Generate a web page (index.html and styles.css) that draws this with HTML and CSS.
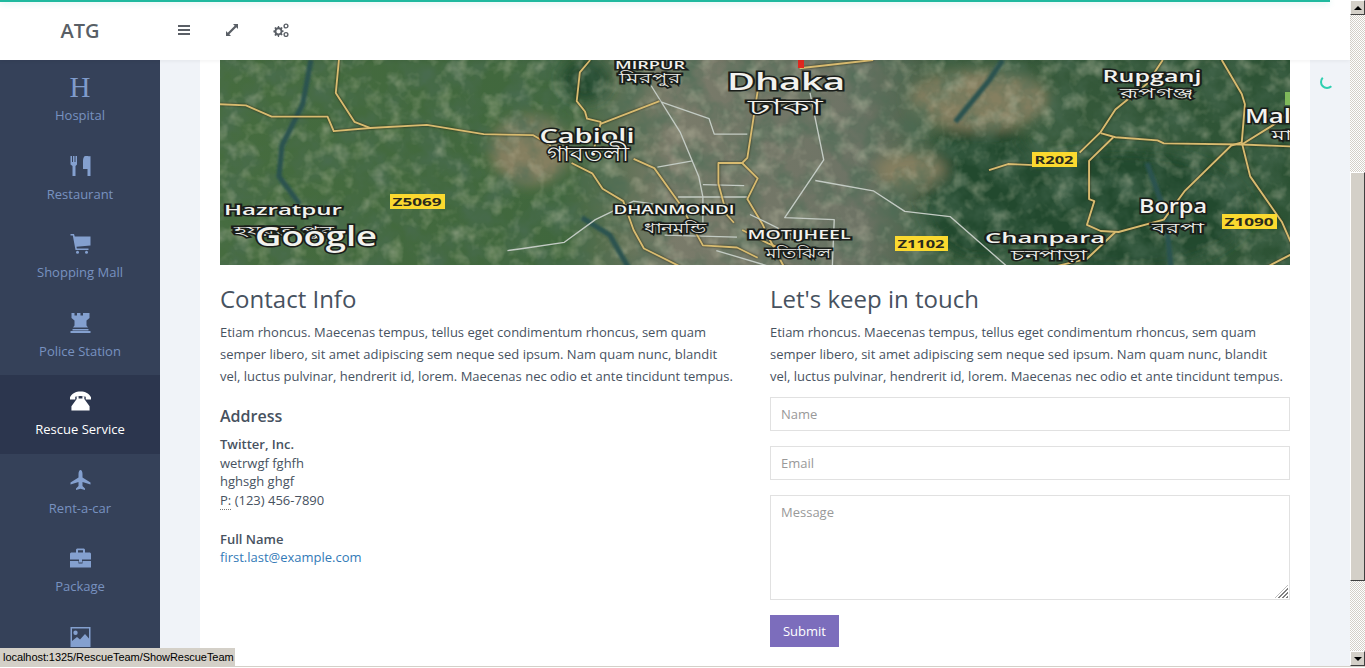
FILE: index.html
```html
<!DOCTYPE html>
<html lang="en">

<head>
    <meta charset="UTF-8">
    <meta name="viewport" content="width=device-width, initial-scale=1.0">
    <title>Contact</title>
    <link rel="stylesheet" href="styles.css">
</head>

<body>
    <div class="window">
        <div class="viewport">
            <header class="topbar">
                <div class="brand">ATG</div>
                <nav class="tools">
                    <a class="tool" href="#"><svg viewBox="0 0 14 14"><path d="M1 2h12v2H1zM1 6h12v2H1zM1 10h12v2H1z"/></svg></a>
                    <a class="tool" href="#"><svg viewBox="0 0 14 14"><path d="M8 1H13V6L11.300 4.300 4.300 11.300 6 13H1V8L2.700 9.700 9.700 2.700z"/></svg></a>
                    <a class="tool tool-wide" href="#"><svg viewBox="0 0 16 14"><path fill-rule="evenodd" d="M5 3l1 0 .4 1.300 1 .4L8.600 4l1 1-.7 1.200.4 1L10.600 7.600v1.200l-1.300.4-.4 1 .7 1.200-1 1-1.200-.7-1 .4L6 14H5l-.4-1.400-1-.4-1.200.7-1-1 .7-1.200-.4-1L.4 9.200V7.600l1.300-.4.4-1L1.400 5l1-1 1.200.7 1-.4zM5.500 6.300a2.100 2.100 0 1 0 0 4.200 2.100 2.100 0 0 0 0-4.200z"/><circle class="cog-ring" cx="13" cy="3" r="1.900"/><circle class="cog-ring" cx="13" cy="11.500" r="1.900"/></svg></a>
                </nav>
            </header>
            <div class="main">
                <aside class="sidebar">
                    <a class="side-item" href="#"><span class="side-icon side-letter">H</span><span>Hospital</span></a>
                    <a class="side-item" href="#"><span class="side-icon"><svg viewBox="0 0 20 20"><path d="M0 0h1.500v6h1V0H4v6h1V0h1.500v8.500L5 10v10H2V10L0 8.500zM15 0c2 0 5 .5 5 0v20h-3v-7h-4.500V5C12.500 2 13.500 0 15 0z"/></svg></span><span>Restaurant</span></a>
                    <a class="side-item" href="#"><span class="side-icon"><svg viewBox="0 0 20 20"><path d="M0 0h3.500L4.300 2.500H20v9l-14 1.200.4 1.800H18v1.500H5L2.300 1.500H0z"/><circle cx="7" cy="18.300" r="1.500"/><circle cx="16" cy="18.300" r="1.500"/></svg></span><span>Shopping Mall</span></a>
                    <a class="side-item" href="#"><span class="side-icon"><svg viewBox="0 0 20 20"><path d="M1 0h3v2.500h2.500V0h3.500v2.500h2.500V0h3v0H19v5l-3 2.500v5l1.500 2h-15l1.500-2v-5L1 5zM2 16h16v1.500H2zM0 18h20v2H0z"/></svg></span><span>Police Station</span></a>
                    <a class="side-item is-active" href="#"><span class="side-icon"><svg viewBox="0 0 22 20"><path d="M0 6C2 2 6 0 11 0s9 2 11 6v2.500h-5.500V5.500c-3-1-8-1-11 0v3H0z"/><path d="M7 5h2v2.500h4V5h2v3l5.500 7.500V20h-19v-4.500L7 8z"/></svg></span><span>Rescue Service</span></a>
                    <a class="side-item" href="#"><span class="side-icon"><svg viewBox="0 0 20 20"><path d="M10 0c1.200 0 2 2 2 4v3.500l8 5v2L12 12v4l2.500 2.500V20L10 18.800 5.500 20v-1.500L8 16v-4l-8 2.500v-2l8-5V4c0-2 .8-4 2-4z"/></svg></span><span>Rent-a-car</span></a>
                    <a class="side-item" href="#"><span class="side-icon"><svg viewBox="0 0 21 19"><path fill-rule="evenodd" d="M7 0h7l1 1v3h5l1 1v6H0V5l1-1h5V1zM8 1.800V4h5V1.800z"/><path d="M0 12.500h8.500V15h4v-2.500H21V19H0z"/><path d="M9 10.500h3V14H9z"/></svg></span><span>Package</span></a>
                    <a class="side-item" href="#"><span class="side-icon"><svg viewBox="0 0 20 20"><path fill-rule="evenodd" d="M0 0h20v20H0zM1.500 1.500V14l5-4 3 2.500 5-5.500 4 4.500v-10zM5 3.500a2.200 2.200 0 1 1 0 4.400 2.200 2.200 0 0 1 0-4.400z"/></svg></span></a>
                </aside>

                <div class="content">
                    <div class="card">
                        <svg class="map" viewBox="0 0 1070 205" preserveAspectRatio="none">
                            <defs>
                                <linearGradient id="land" x1="0" x2="1" y1="0" y2="0">
                                    <stop offset="0" stop-color="#466c3f"/>
                                    <stop offset=".32" stop-color="#40673d"/>
                                    <stop offset=".42" stop-color="#7a7b6a"/>
                                    <stop offset=".6" stop-color="#6d7365"/>
                                    <stop offset=".68" stop-color="#3a5c3d"/>
                                    <stop offset="1" stop-color="#2c5234"/>
                                </linearGradient>
                                <filter id="soft"><feGaussianBlur stdDeviation="7"/></filter>
                                <filter id="soft2"><feGaussianBlur stdDeviation="1.200"/></filter>
                                <filter id="grain" x="0" y="0" width="100%" height="100%">
                                    <feTurbulence type="fractalNoise" baseFrequency=".035" numOctaves="4" seed="7"/>
                                    <feColorMatrix values="0 0 0 0 .07  0 0 0 0 .15  0 0 0 0 .09  1.500 0 0 0 -.55"/>
                                </filter>
                                <filter id="grain2" x="0" y="0" width="100%" height="100%">
                                    <feTurbulence type="fractalNoise" baseFrequency=".06" numOctaves="3" seed="21"/>
                                    <feColorMatrix values="0 0 0 0 .72  0 0 0 0 .7  0 0 0 0 .52  0 .8 0 0 -.38"/>
                                </filter>
                            </defs>
                            <rect width="1070" height="205" fill="url(#land)"/>
                            <g filter="url(#soft)">
                                <ellipse class="patch-dark" cx="900" cy="150" rx="130" ry="60"/>
                                <ellipse class="patch-dark" cx="760" cy="130" rx="60" ry="70"/>
                                <ellipse class="patch-dark" cx="365" cy="20" rx="25" ry="22"/>
                                <ellipse class="patch-tan" cx="310" cy="90" rx="40" ry="35"/>
                                <ellipse class="patch-tan" cx="760" cy="40" rx="70" ry="30"/>
                                <ellipse class="patch-tan" cx="690" cy="110" rx="35" ry="18"/>
                            </g>
                            <rect width="1070" height="205" filter="url(#grain)"/>
                            <rect width="1070" height="205" filter="url(#grain2)"/>
                            <g class="map-west" transform="scale(1.034 1.03)">
                                <g class="river" filter="url(#soft2)">
                                    <path d="M88 0L80 43 60 83 57 113 77 140"/>
                                    <path d="M350 153L377 170 397 205"/>
                                </g>
                                <g class="road-white">
                                    <path d="M278 185L293 183 333 177 363 155 400 137 420 140"/>
                                    <path d="M417 25L445 70 463 113 467 133 467 165"/>
                                    <path d="M427 41L473 57 478 72 510 72"/>
                                    <path d="M423 104L457 98"/>
                                    <path d="M467 121L507 122M443 133L510 133"/>
                                    <path d="M430 170L500 172M480 185L530 200"/>
                                </g>
                                <g class="road">
                                    <path d="M0 43L25 44 50 55 104 55 110 69 145 66 200 63 255 72 303 73 320 83"/>
                                    <path d="M115 0L112 32 130 60 145 66"/>
                                    <path d="M358 0L348 12 345 40 353 50 355 57 368 60 368 62 425 40"/>
                                    <path d="M368 62L362 85"/>
                                    <path d="M340 100L360 110 370 125 390 137 400 165 410 183 450 203"/>
                                    <path d="M400 96L420 105 445 140 467 180 500 182 520 192"/>
                                    <path d="M520 30L510 95 505 100 482 100 482 120 490 150 497 158"/>
                                    <path d="M505 100L520 115 510 135 525 160 532 175 545 200 575 205"/>
                                    <path d="M505 165L530 178 560 190"/>
                                </g>
                            </g>
                            <g class="map-east" transform="translate(530 0) scale(1.053 1.03) translate(-530 0)">
                                <g class="river" filter="url(#soft2)">
                                    <path d="M907 100L925 150 930 205"/>
                                    <path d="M725 60L757 20 770 0"/>
                                </g>
                                <g class="road-white">
                                    <path d="M587 32L600 97 563 153 610 155 608 205"/>
                                    <path d="M592 117L647 127 677 147 720 152 777 203"/>
                                    <path d="M530 150L580 175"/>
                                </g>
                                <g class="road">
                                    <path d="M577 8L647 0"/>
                                    <path d="M922 0L907 23 877 48 863 70 843 90"/>
                                    <path d="M757 107L775 101 800 102"/>
                                    <path d="M863 71L877 75 917 78 923 81 997 82 1070 85"/>
                                    <path d="M875 75L852 98 852 135 857 137 850 160 863 166 880 167 923 155 943 127 987 83 997 80"/>
                                    <path d="M978 0L997 33 1000 43 997 80 1005 113 1035 157 1048 187 1060 205"/>
                                    <path d="M997 82L1027 63 1070 30"/>
                                    <path d="M877 167L850 193 813 202"/>
                                    <path d="M1013 205L1070 175"/>
                                </g>
                            </g>
                            <rect class="map-marker" x="578" y="0" width="6" height="8"/>
                            <rect class="map-green" x="1065" y="32" width="5" height="13"/>
                            <g class="shield">
                                <rect x="170" y="134" width="55" height="15"/>
                                <rect x="812" y="92" width="45" height="15"/>
                                <rect x="675" y="176" width="53" height="15"/>
                                <rect x="1002" y="154" width="55" height="15"/>
                            </g>
                            <g class="shield-text">
                                <text x="197" y="146" textLength="49" lengthAdjust="spacingAndGlyphs">Z5069</text>
                                <text x="834" y="104" textLength="39" lengthAdjust="spacingAndGlyphs">R202</text>
                                <text x="701" y="188" textLength="47" lengthAdjust="spacingAndGlyphs">Z1102</text>
                                <text x="1029" y="166" textLength="49" lengthAdjust="spacingAndGlyphs">Z1090</text>
                            </g>
                            <g class="label">
                                <text class="fs-10" x="430" y="9" textLength="70" lengthAdjust="spacingAndGlyphs">MIRPUR</text>
                                <text class="fs-22" x="566" y="30" textLength="118" lengthAdjust="spacingAndGlyphs">Dhaka</text>
                                <text class="fs-19" x="367" y="83" textLength="95" lengthAdjust="spacingAndGlyphs">Cabioli</text>
                                <text class="fs-15" x="63" y="155" textLength="118" lengthAdjust="spacingAndGlyphs">Hazratpur</text>
                                <text class="fs-11" x="454" y="154" textLength="121" lengthAdjust="spacingAndGlyphs">DHANMONDI</text>
                                <text class="fs-11" x="579" y="179" textLength="103" lengthAdjust="spacingAndGlyphs">MOTIJHEEL</text>
                                <text class="fs-16" x="932" y="22" textLength="99" lengthAdjust="spacingAndGlyphs">Rupganj</text>
                                <text class="fs-19" x="953" y="153" textLength="68" lengthAdjust="spacingAndGlyphs">Borpa</text>
                                <text class="fs-15" x="825" y="183" textLength="120" lengthAdjust="spacingAndGlyphs">Chanpara</text>
                                <text class="fs-19" x="1048" y="63" textLength="46" lengthAdjust="spacingAndGlyphs">Mal</text>
                                <text class="fs-bn" x="430" y="23" textLength="62" lengthAdjust="spacingAndGlyphs">মিরপুর</text>
                                <text class="fs-bn-lg" x="565" y="54" textLength="74" lengthAdjust="spacingAndGlyphs">ঢাকা</text>
                                <text class="fs-bn-lg" x="368" y="101" textLength="82" lengthAdjust="spacingAndGlyphs">গাবতলী</text>
                                <text class="fs-bn" x="64" y="176" textLength="100" lengthAdjust="spacingAndGlyphs">হযরত পুর</text>
                                <text class="fs-bn" x="455" y="173" textLength="62" lengthAdjust="spacingAndGlyphs">ধানমন্ডি</text>
                                <text class="fs-bn" x="578" y="198" textLength="65" lengthAdjust="spacingAndGlyphs">মতিঝিল</text>
                                <text class="fs-bn" x="937" y="38" textLength="74" lengthAdjust="spacingAndGlyphs">রূপগঞ্জ</text>
                                <text class="fs-bn" x="958" y="173" textLength="52" lengthAdjust="spacingAndGlyphs">বরপা</text>
                                <text class="fs-bn" x="829" y="200" textLength="76" lengthAdjust="spacingAndGlyphs">চনপাড়া</text>
                                <text class="fs-bn" x="1062" y="80" textLength="20" lengthAdjust="spacingAndGlyphs">মা</text>
                                <text class="fs-28" x="96" y="186" textLength="122" lengthAdjust="spacingAndGlyphs">Google</text>
                            </g>
                        </svg>

                        <div class="columns">
                            <section>
                                <h3>Contact Info</h3>
                                <p class="lead">Etiam rhoncus. Maecenas tempus, tellus eget condimentum rhoncus, sem quam semper libero, sit amet adipiscing sem neque sed ipsum. Nam quam nunc, blandit vel, luctus pulvinar, hendrerit id, lorem. Maecenas nec odio et ante tincidunt tempus.</p>
                                <h4>Address</h4>
                                <address>
                                    <strong>Twitter, Inc.</strong><br>
                                    wetrwgf fghfh<br>
                                    hghsgh ghgf<br>
                                    <abbr title="Phone">P:</abbr> (123) 456-7890
                                </address>
                                <address>
                                    <strong>Full Name</strong><br>
                                    <a href="#">first.last@example.com</a>
                                </address>
                            </section>
                            <section>
                                <h3>Let's keep in touch</h3>
                                <p class="lead">Etiam rhoncus. Maecenas tempus, tellus eget condimentum rhoncus, sem quam semper libero, sit amet adipiscing sem neque sed ipsum. Nam quam nunc, blandit vel, luctus pulvinar, hendrerit id, lorem. Maecenas nec odio et ante tincidunt tempus.</p>
                                <form class="contact-form">
                                    <input type="text" placeholder="Name">
                                    <input type="text" placeholder="Email">
                                    <div class="message">
                                        <textarea placeholder="Message"></textarea>
                                    </div>
                                    <button type="button">Submit</button>
                                </form>
                            </section>
                        </div>
                    </div>
                    <div class="gutter"><div class="spinner"></div></div>
                </div>
            </div>
        </div>
        <div class="scrollbar">
            <div class="sb-btn"><span class="arrow-up"></span></div>
            <div class="sb-track sb-track-top"></div>
            <div class="sb-thumb"></div>
            <div class="sb-track"></div>
            <div class="sb-btn"><span class="arrow-down"></span></div>
        </div>
    </div>
    <div class="statusbar">localhost:1325/RescueTeam/ShowRescueTeam</div>
</body>

</html>
```

FILE: styles.css
```css
* {
    margin: 0;
    padding: 0;
    box-sizing: border-box;
}

html,
body {
    height: 668px;
    overflow: hidden;
    background: #fff;
}

body {
    font-family: "Open Sans", "Noto Sans", sans-serif;
    font-size: 13px;
    color: #47525f;
}

a {
    text-decoration: none;
}

.window {
    display: flex;
    height: 667px;
    border-bottom: 1px solid #d4d0c8;
}

.viewport {
    flex: 1;
    min-width: 0;
    display: flex;
    flex-direction: column;
}

/* top bar */
.topbar {
    position: relative;
    height: 60px;
    flex: none;
    display: flex;
    align-items: center;
    background: #fff;
    box-shadow: 0 1px 4px rgba(0, 0, 0, .06);
    z-index: 2;
}

.topbar::before {
    content: "";
    position: absolute;
    left: 0;
    top: 0;
    width: 1330px;
    height: 2px;
    background: #1fb99e;
    box-shadow: 0 1px 6px rgba(31, 185, 158, .3);
}

.brand {
    width: 160px;
    text-align: center;
    font-size: 20px;
    font-weight: 600;
    color: #595f66;
}

.tools {
    display: flex;
    align-items: center;
    padding-left: 17px;
    gap: 34px;
}

.tool {
    display: block;
    width: 14px;
    height: 14px;
}

.tool-wide {
    width: 16px;
}

.tool svg {
    display: block;
    width: 100%;
    height: 100%;
    fill: #5a5f66;
}

.tool .cog-ring {
    fill: none;
    stroke: #5a5f66;
    stroke-width: 1.400;
}

/* side menu */
.main {
    flex: 1;
    min-height: 0;
    display: flex;
}

.sidebar {
    width: 160px;
    flex: none;
    padding-top: 1px;
    background: #354159;
    overflow: hidden;
}

.side-item {
    height: 78.5px;
    display: flex;
    flex-direction: column;
    align-items: center;
    padding-top: 13px;
    color: #7892c0;
    line-height: 18px;
}

.side-icon {
    height: 26px;
    margin-bottom: 6px;
    display: flex;
    align-items: center;
    justify-content: center;
}

.side-icon svg {
    display: block;
    width: 21px;
    height: 20px;
    fill: #84a0cf;
}

.side-letter {
    font-family: "Liberation Serif", serif;
    font-size: 29px;
    color: #7f9bcb;
}

.side-item.is-active {
    background: #2c364e;
    color: #fff;
}

.side-item.is-active svg {
    fill: #fff;
}

/* page content */
.content {
    flex: 1;
    min-width: 0;
    display: flex;
    padding-left: 40px;
    background: #f0f3f8;
}

.card {
    width: 1110px;
    flex: none;
    padding: 0 20px;
    background: #fff;
}

.map {
    display: block;
    width: 1070px;
    height: 205px;
}

.patch-dark {
    fill: #234a2e;
}

.patch-tan {
    fill: #857f60;
}

.river path {
    fill: none;
    stroke: #2c5350;
    stroke-width: 5;
}

.road path,
.road-white path {
    fill: none;
    stroke-linejoin: round;
}

.road {
    filter: drop-shadow(0 0 1px #2b2a12);
}

.road path {
    stroke: #d8bb70;
    stroke-width: 1.800;
}

.road-white path {
    stroke: #c3cbc4;
    stroke-width: 1.300;
}

.map-marker {
    fill: #e0281f;
}

.map-green {
    fill: #7fb85a;
}

.shield rect {
    fill: #fbd92f;
}

.shield-text text {
    font-family: "Open Sans", sans-serif;
    font-size: 11px;
    font-weight: 700;
    fill: #2b2a1c;
    text-anchor: middle;
}

.label text {
    font-family: "Open Sans", sans-serif;
    font-weight: 600;
    fill: #f2f2ee;
    stroke: #1a1e1a;
    stroke-width: 3px;
    paint-order: stroke;
    text-anchor: middle;
}

.fs-10 {
    font-size: 11px;
}

.fs-11 {
    font-size: 12px;
}

.fs-15 {
    font-size: 15px;
}

.fs-16 {
    font-size: 16px;
}

.fs-19 {
    font-size: 19px;
}

.fs-22 {
    font-size: 24px;
}

.fs-28 {
    font-size: 27px;
}

.label .fs-bn {
    font-size: 14px;
    font-weight: 400;
}

.label .fs-bn-lg {
    font-size: 21px;
    font-weight: 400;
}

.columns {
    display: grid;
    grid-template-columns: 520px 520px;
    gap: 30px;
    padding-top: 19px;
}

h3 {
    font-size: 24px;
    font-weight: 400;
    line-height: 30px;
    color: #47525f;
}

h4 {
    margin-top: 18px;
    font-size: 16px;
    font-weight: 600;
    line-height: 22px;
    color: #47525f;
}

.lead {
    margin-top: 7px;
    line-height: 22px;
}

address {
    margin-top: 8px;
    font-style: normal;
    line-height: 18.570px;
}

address + address {
    margin-top: 20.400px;
}

strong {
    font-weight: 600;
}

abbr {
    text-decoration: none;
    border-bottom: 1px dotted #777;
}

address a {
    color: #337ab7;
}

/* form */
.contact-form {
    display: flex;
    flex-direction: column;
    align-items: flex-start;
    margin-top: 10px;
    gap: 15px;
}

.contact-form input,
.contact-form textarea {
    display: block;
    width: 520px;
    height: 34px;
    padding: 6px 10px;
    border: 1px solid #e1e1e1;
    font-family: inherit;
    font-size: 13px;
    line-height: 20px;
    color: #47525f;
    background: #fff;
    outline: none;
}

.contact-form textarea {
    height: 105px;
    resize: none;
}

.message {
    position: relative;
}

/* resize grip */
.message::after {
    content: "";
    position: absolute;
    right: 2px;
    bottom: 2px;
    width: 13px;
    height: 13px;
    background: repeating-linear-gradient(135deg, #808080 0 1px, #fff 1px 2.800px);
    clip-path: polygon(100% 0, 100% 100%, 0 100%);
}

.contact-form ::placeholder {
    color: #999;
    opacity: 1;
}

.contact-form button {
    width: 69px;
    height: 32px;
    border: 0;
    background: #7c6dbc;
    color: #fff;
    font-family: inherit;
    font-size: 13px;
}

.gutter {
    flex: 1;
    padding: 15px 0 0 10px;
}

.spinner {
    width: 14px;
    height: 14px;
    border-radius: 50%;
    border: 2px solid transparent;
    border-left-color: #2ecfb0;
    border-bottom-color: #2ecfb0;
}

/* window chrome */
.scrollbar {
    width: 15px;
    flex: none;
    display: flex;
    flex-direction: column;
    background: #d4d0c8;
}

.sb-btn {
    height: 15px;
    flex: none;
    display: flex;
    align-items: center;
    justify-content: center;
    background: #d4d0c8;
    border: 1px solid;
    border-color: #fff #404040 #404040 #fff;
}

.arrow-up,
.arrow-down {
    width: 0;
    height: 0;
    border-left: 4px solid transparent;
    border-right: 4px solid transparent;
}

.arrow-up {
    border-bottom: 4px solid #000;
}

.arrow-down {
    border-top: 4px solid #000;
}

.sb-track {
    flex: 1;
    background: repeating-conic-gradient(#d4d0c8 0 25%, #fff 0 50%) 0 0 / 2px 2px;
}

.sb-track-top {
    flex: none;
    height: 157px;
}

.sb-thumb {
    height: 409px;
    flex: none;
    background: #d4d0c8;
    border: 1px solid;
    border-color: #fff #404040 #404040 #fff;
}

.statusbar {
    position: fixed;
    left: 0;
    top: 648px;
    width: 235px;
    height: 18px;
    padding-left: 3px;
    background: #d4d0c8;
    font-family: "Liberation Sans", sans-serif;
    font-size: 11px;
    letter-spacing: -.06px;
    line-height: 18px;
    color: #000;
    white-space: nowrap;
    overflow: hidden;
}
```
